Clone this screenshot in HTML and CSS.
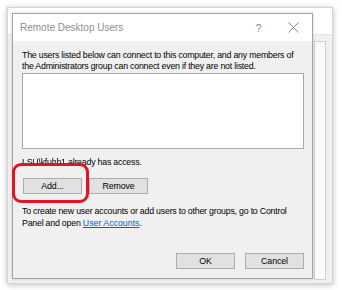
FILE: index.html
```html
<!DOCTYPE html>
<html lang="en">
  <head>
    <meta charset="UTF-8" />
    <title>Remote Desktop Users</title>
    <link rel="stylesheet" href="styles.css">
  </head>
  <body>
    <div class="backwin">
      <div class="backwin-head"></div>
      <div class="backwin-body">
        <div class="backwin-panel"></div>
      </div>

      <!-- the dialog sits on top of the properties window -->
      <div class="dialog">
        <div class="titlebar">
          <span class="title">Remote Desktop Users</span>
          <span class="tb-btn help">?</span>
          <span class="tb-btn close">
            <svg width="11" height="11" viewBox="0 0 11 11">
              <path d="M0.5 0.5 L10.5 10.5 M10.5 0.5 L0.5 10.5" stroke="#8c8c8c" stroke-width="1" fill="none" />
            </svg>
          </span>
        </div>
        <div class="dialog-body">
          <p class="intro">The users listed below can connect to this computer, and any members of the Administrators group can connect even if they are not listed.</p>
          <div class="userlist"></div>
          <p class="access"><span class="hidden-name">LSU\kfuhh1</span> already has access.</p>
          <div class="row">
            <button class="btn">Add...</button>
            <button class="btn">Remove</button>
            <div class="highlight"></div>
          </div>
          <p class="hint">To create new user accounts or add users to other groups, go to Control Panel and open <a href="#">User Accounts</a>.</p>
          <div class="footer">
            <button class="btn">OK</button>
            <button class="btn">Cancel</button>
          </div>
        </div>
      </div>
    </div>
  </body>
</html>
```

FILE: styles.css
```css
body {
  margin: 0;
  padding: 7px;
  background-color: #ffffff;
  font-family: "Liberation Sans", Arial, sans-serif;
  width: 342px;
  height: 290px;
  box-sizing: border-box;
  overflow: hidden;
}

.backwin {
  position: relative;
  width: 326px;
  height: 277px;
  box-sizing: border-box;
  border: 1px solid #d4d4d4;
  background-color: #f0f0f0;
  box-shadow: 0 1px 6px rgba(0, 0, 0, 0.25);
  display: flex;
  flex-direction: column;
}

.backwin-head {
  height: 26px;
  background: #ffffff;
  border-bottom: 1px solid #e3e3e3;
}

.backwin-body {
  flex: 1;
  display: flex;
  justify-content: flex-end;
  padding: 6px 6px 3px 0;
}

.backwin-panel {
  width: 10px;
  background: #fbfbfb;
  border: 1px solid #d0d0d0;
}

.dialog {
  position: absolute;
  left: 4px;
  top: 5px;
  width: 301px;
  height: 266px;
  box-sizing: border-box;
  border: 1px solid #a3a3a3;
  background-color: #f0f0f0;
  display: flex;
  flex-direction: column;
  box-shadow: 0 0 3px rgba(0, 0, 0, 0.15);
}

.titlebar {
  height: 27px;
  background: #ffffff;
  display: flex;
  align-items: center;
  padding-left: 7px;
  color: #8e8e8e;
}

.title {
  flex: 1;
  font-size: 10px;
}

.tb-btn {
  width: 35px;
  text-align: center;
  font-size: 11px;
  color: #8c8c8c;
}

.close {
  display: flex;
  justify-content: center;
  margin-right: 1px;
}

.dialog-body {
  flex: 1;
  display: flex;
  flex-direction: column;
  padding: 0 8px 9px 9px;
  font-size: 8.8px;
  letter-spacing: -0.22px;
  color: #000;
}

.intro {
  margin: 9px 0 0;
  line-height: 11px;
}

.userlist {
  height: 74px;
  margin-top: 1px;
  background: #ffffff;
  border: 1px solid #a9a9a9;
}

.access {
  margin: 8px 0 0;
  line-height: 11px;
}

.hidden-name {
  filter: blur(0.7px);
}

.row {
  position: relative;
  display: flex;
  gap: 7px;
  margin-top: 10px;
  padding-left: 1px;
}

.btn {
  width: 59px;
  height: 16px;
  padding: 0;
  margin: 0;
  font-family: "Liberation Sans", Arial, sans-serif;
  font-size: 8.8px;
  letter-spacing: -0.1px;
  color: #000;
  background-color: #e1e1e1;
  border: 1px solid #adadad;
  border-radius: 0;
}

.highlight {
  position: absolute;
  left: -10px;
  top: -15px;
  width: 77px;
  height: 40px;
  box-sizing: border-box;
  border: 3px solid #e3141e;
  border-radius: 9px;
}

.hint {
  margin: 11px 0 0;
  line-height: 12px;
}

.hint a {
  color: #0066cc;
  letter-spacing: 0;
}

.footer {
  margin-top: auto;
  display: flex;
  justify-content: flex-end;
  gap: 10px;
}
```
